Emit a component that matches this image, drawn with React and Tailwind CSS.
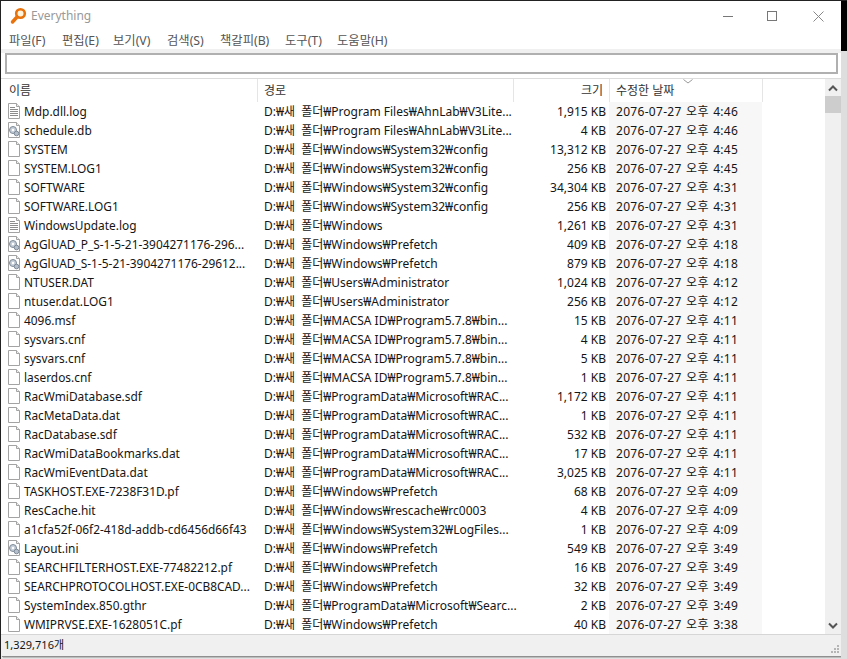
const FONT = '"Noto Sans", "Noto Sans CJK KR", sans-serif';

const MENUS = [
  { label: '파일(F)', w: 'w-[53px]' },
  { label: '편집(E)', w: 'w-[51px]' },
  { label: '보기(V)', w: 'w-[54px]' },
  { label: '검색(S)', w: 'w-[53px]' },
  { label: '책갈피(B)', w: 'w-[65px]' },
  { label: '도구(T)', w: 'w-[52px]' },
  { label: '도움말(H)', w: 'w-[64px]' },
];

const V3 = '₩Program Files₩AhnLab₩V3Lite...';
const CFG = '₩Windows₩System32₩config';
const PRE = '₩Windows₩Prefetch';
const USR = '₩Users₩Administrator';
const MAC = '₩MACSA ID₩Program5.7.8₩bin...';
const RAC = '₩ProgramData₩Microsoft₩RAC...';

const ROWS = [
  ['Mdp.dll.log', V3, '1,915 KB', '4:46', 'text'],
  ['schedule.db', V3, '4 KB', '4:46', 'gear'],
  ['SYSTEM', CFG, '13,312 KB', '4:45'],
  ['SYSTEM.LOG1', CFG, '256 KB', '4:45'],
  ['SOFTWARE', CFG, '34,304 KB', '4:31'],
  ['SOFTWARE.LOG1', CFG, '256 KB', '4:31'],
  ['WindowsUpdate.log', '₩Windows', '1,261 KB', '4:31', 'text'],
  ['AgGlUAD_P_S-1-5-21-3904271176-296...', PRE, '409 KB', '4:18', 'gear'],
  ['AgGlUAD_S-1-5-21-3904271176-29612...', PRE, '879 KB', '4:18', 'gear'],
  ['NTUSER.DAT', USR, '1,024 KB', '4:12'],
  ['ntuser.dat.LOG1', USR, '256 KB', '4:12'],
  ['4096.msf', MAC, '15 KB', '4:11'],
  ['sysvars.cnf', MAC, '4 KB', '4:11'],
  ['sysvars.cnf', MAC, '5 KB', '4:11'],
  ['laserdos.cnf', MAC, '1 KB', '4:11'],
  ['RacWmiDatabase.sdf', RAC, '1,172 KB', '4:11'],
  ['RacMetaData.dat', RAC, '1 KB', '4:11'],
  ['RacDatabase.sdf', RAC, '532 KB', '4:11'],
  ['RacWmiDataBookmarks.dat', RAC, '17 KB', '4:11'],
  ['RacWmiEventData.dat', RAC, '3,025 KB', '4:11'],
  ['TASKHOST.EXE-7238F31D.pf', PRE, '68 KB', '4:09'],
  ['ResCache.hit', '₩Windows₩rescache₩rc0003', '4 KB', '4:09'],
  ['a1cfa52f-06f2-418d-addb-cd6456d66f43', '₩Windows₩System32₩LogFiles...', '1 KB', '4:09'],
  ['Layout.ini', PRE, '549 KB', '3:49', 'gear'],
  ['SEARCHFILTERHOST.EXE-77482212.pf', PRE, '16 KB', '3:49'],
  ['SEARCHPROTOCOLHOST.EXE-0CB8CAD...', PRE, '32 KB', '3:49'],
  ['SystemIndex.850.gthr', '₩ProgramData₩Microsoft₩Searc...', '2 KB', '3:49'],
  ['WMIPRVSE.EXE-1628051C.pf', PRE, '40 KB', '3:38'],
];

function FileIcon({ kind }) {
  return (
    <svg width="14" height="16" viewBox="0 0 14 16" className="shrink-0">
      <path d="M1.5 .5H9.5L12.5 3.5V15.5H1.5Z" fill="#fff" stroke="#a3a3a3" />
      <path d="M9.5 .5V3.5H12.5" fill="#eee" stroke="#a3a3a3" />
      {kind === 'text' && (
        <path d="M3 4.5H8M3 6.5H11M3 8.5H11M3 10.5H11M3 12.5H11" stroke="#8c8c8c" fill="none" />
      )}
      {kind === 'gear' && (
        <g>
          <circle cx="6" cy="8" r="3.5" fill="#c4cdd8" stroke="#7f8b99" />
          <circle cx="6" cy="8" r="1.2" fill="#fff" />
          <circle cx="9.5" cy="11.5" r="2.3" fill="#b5bfcb" stroke="#7f8b99" />
        </g>
      )}
    </svg>
  );
}

function Row({ name, path, size, time, kind }) {
  return (
    <div className="flex h-[19px] items-center text-[12px] text-[#151515]">
      <div className="flex w-[255px] items-center pl-[5px]">
        <FileIcon kind={kind} />
        <span className="ml-[3px] whitespace-nowrap text-[11.9px]">{name}</span>
      </div>
      <div className="w-[256px] whitespace-nowrap pl-[7px]">
        D:₩<span className="[word-spacing:3px]">새 폴더</span>{path}
      </div>
      <div className="w-[96px] pr-[3px] text-right whitespace-nowrap">{size}</div>
      <div className="flex h-full w-[153px] items-center whitespace-pre bg-[#f7f7f7] pl-[7px] tracking-[0.3px] [word-spacing:1px]">
        2076-07-27 오후 {time}
      </div>
    </div>
  );
}

function HeaderCell({ className, children }) {
  return (
    <div className={`flex h-full items-center border-r border-[#e5e5e5] text-[12px] text-[#333] ${className}`}>
      {children}
    </div>
  );
}

export default function App() {
  return (
    <div className="flex h-[659px] w-[847px] flex-col overflow-hidden bg-[#e8e8e8]" style={{ fontFamily: FONT }}>
      <div className="h-px shrink-0 bg-[#222]" />
      <div className="flex min-h-0 flex-1">
        <div className="w-px bg-[#222]" />
        <div className="flex h-[655px] w-[840px] flex-col bg-white shadow-[1px_1px_0_#8f8f8f,2px_2px_1px_#bdbdbd]">
          {/* title bar */}
          <div className="flex h-[30px] shrink-0 items-center">
            <svg width="18" height="18" viewBox="0 0 18 18" className="ml-[9px] shrink-0">
              <circle cx="10.5" cy="6.5" r="4.3" fill="#fff4dc" stroke="#e8720c" strokeWidth="2.6" />
              <path d="M7 10L2.5 15" stroke="#e8720c" strokeWidth="3.4" strokeLinecap="round" />
            </svg>
            <span className="ml-[3px] text-[12px] text-[#999]">Everything</span>
            <div className="ml-auto flex items-center">
              <svg width="11" height="11" viewBox="0 0 11 11" className="mr-[33px]"><path d="M0 5.5H10" stroke="#777" /></svg>
              <svg width="11" height="11" viewBox="0 0 11 11" className="mr-[35px]"><rect x=".5" y=".5" width="9" height="9" fill="none" stroke="#777" /></svg>
              <svg width="11" height="11" viewBox="0 0 11 11" className="mr-[17px]"><path d="M.5 .5L10.5 10.5M10.5 .5L.5 10.5" stroke="#888" /></svg>
            </div>
          </div>
          {/* menu */}
          <div className="flex h-[18px] shrink-0 items-center pl-[8px] pt-[2px] text-[12.3px] text-[#555]">
            {MENUS.map((m) => (
              <span key={m.label} className={`${m.w} whitespace-nowrap`}>{m.label}</span>
            ))}
          </div>
          {/* search */}
          <div className="h-[4px] shrink-0 bg-[#f0f0f0]" />
          <div className="mx-[4px] h-[21px] w-[833px] shrink-0 border-2 border-[#b0b0b0] bg-white" />
          <div className="h-[4px] shrink-0" />
          {/* list */}
          <div className="flex min-h-0 flex-1 border-t border-[#dcdcdc]">
            <div className="min-w-0 flex-1 pl-px">
              <div className="relative flex h-[23px] items-center">
                <HeaderCell className="w-[256px] pl-[7px]">이름</HeaderCell>
                <HeaderCell className="w-[256px] pl-[6px]">경로</HeaderCell>
                <HeaderCell className="w-[96px] justify-end pr-[6px]">크기</HeaderCell>
                <HeaderCell className="w-[153px] pl-[6px]">수정한 날짜</HeaderCell>
                <svg width="10" height="5" viewBox="0 0 10 5" className="absolute left-[681px] top-0">
                  <path d="M.5 .5L5 4L9.5 .5" fill="none" stroke="#999" />
                </svg>
              </div>
              {ROWS.map(([name, path, size, time, kind], i) => (
                <Row key={i} name={name} path={path} size={size} time={time} kind={kind} />
              ))}
            </div>
            <div className="flex w-[16px] shrink-0 flex-col items-center bg-[#f0f0f0]">
              <svg width="10" height="7" viewBox="0 0 10 7" className="mt-[6px]">
                <path d="M1 5.5L5 1.5L9 5.5" fill="none" stroke="#555" strokeWidth="2" />
              </svg>
              <div className="mt-[4px] h-[17px] w-full bg-[#cdcdcd]" />
              <svg width="10" height="7" viewBox="0 0 10 7" className="mt-auto mb-[5px]">
                <path d="M1 1.5L5 5.5L9 1.5" fill="none" stroke="#555" strokeWidth="2" />
              </svg>
            </div>
          </div>
          {/* status */}
          <div className="flex h-[22px] shrink-0 items-center justify-between border-t border-[#d6d6d6] bg-[#f0f0f0] pl-[3px] text-[11px] text-[#151515]">
            <span>1,329,716개</span>
            <svg width="10" height="10" viewBox="0 0 10 10" fill="#b5b5b5" className="mt-[6px] mr-[1px]">
              <rect x="7" y="1" width="2" height="2" />
              <rect x="4" y="4" width="2" height="2" />
              <rect x="7" y="4" width="2" height="2" />
              <rect x="1" y="7" width="2" height="2" />
              <rect x="4" y="7" width="2" height="2" />
              <rect x="7" y="7" width="2" height="2" />
            </svg>
          </div>
        </div>
        <div className="flex w-[6px] flex-col">
          <div className="h-[50px] bg-black" />
          <div className="flex-1 bg-[#dedede]" />
        </div>
      </div>
    </div>
  );
}
